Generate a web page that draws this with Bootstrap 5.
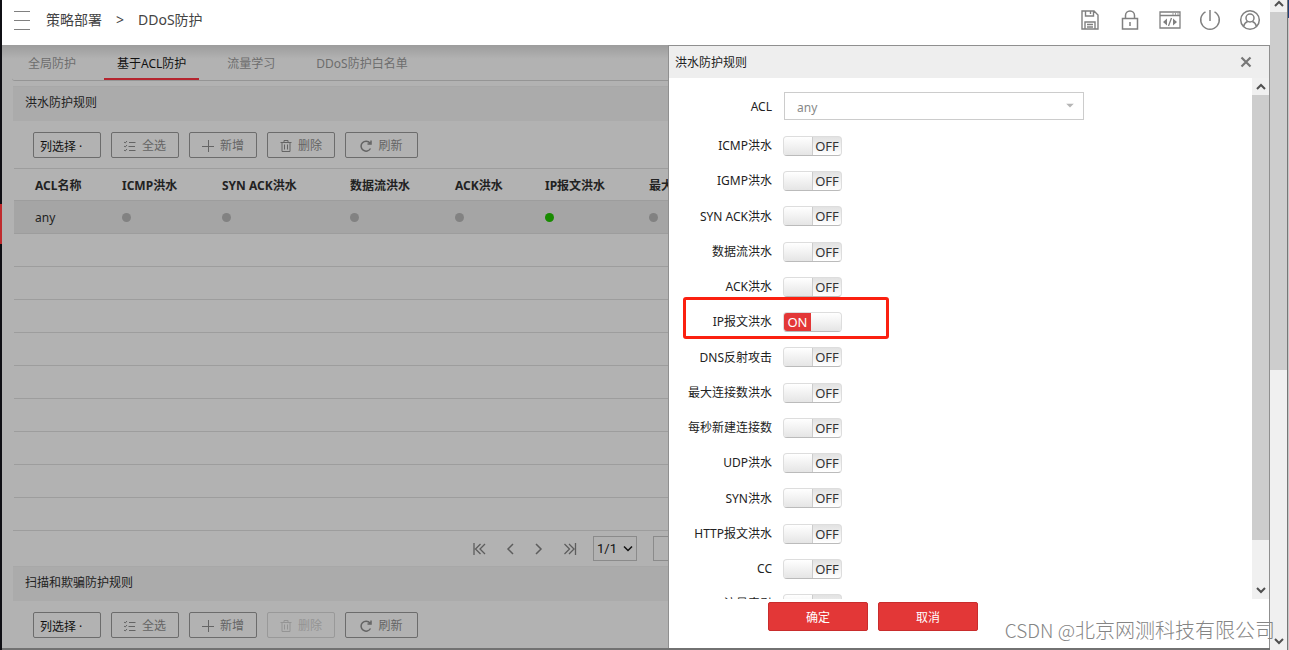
<!DOCTYPE html>
<html lang="zh-CN">
<head>
<meta charset="utf-8">
<meta name="viewport" content="width=device-width, initial-scale=1">
<title>DDoS防护</title>
<link href="https://cdn.jsdelivr.net/npm/bootstrap@5.3.0/dist/css/bootstrap.min.css" rel="stylesheet">
<style>
  body{font:12px/18px "Noto Sans","Noto Sans CJK SC",sans-serif;color:#222;background:#b2b2b2}
  svg{fill:none;stroke:currentColor;display:block}
  .rail{width:2px;background:#0f0f14;padding-top:204px}
  .rail i{display:block;height:40px;background:#c02b2e}
  .topbar{height:45px;background:#fff;padding:0 8px 2px 12px;color:#808080;z-index:1}
  .topbar nav{font-size:14px;color:#444}
  .topbar nav a{color:#444;text-decoration:none}
  .topbar nav span{margin:0 14px}
  .bare{border:0;background:none;padding:0;color:inherit}
  .stage{background:#b2b2b2}
  .stage::before{content:"";position:absolute;inset:0 0 auto;height:14px;background:linear-gradient(#0000001f,#0000);pointer-events:none}
  .page{padding:0 0 0 11px}
  .tabs{height:36px;border-bottom:1px solid #959595;border-bottom-left-radius:3px;margin:0 0 5px -1px;padding-left:3px}
  .tabs .nav-link{padding:10px 13px 0;height:35px;color:#6d6d6d;border-radius:0}
  .tabs .nav-item{margin-right:15px}
  .tabs .active{color:#111;border-bottom:2px solid #b5252f}
  .sect{height:35px;background:#ababab;padding:0 12px;font-size:12px;line-height:32px;margin:0;color:#222;font-weight:400;border-top:1px solid #a8a8a8}
  .tools{padding:11px 20px 10px;gap:10px}
  .tool{width:68px;height:26px;border:1px solid #6c6c6c;border-radius:2px;background:none;color:#646464;font-size:12px;padding:2px 0 0;gap:6px}
  .tool.wide{width:73px}
  .tool:disabled{border-color:#999;color:#949494}
  .pick{color:#111;padding:3px 0 0 6px}
  .rules{table-layout:fixed;margin:0 0 0 1px;border-collapse:separate;border-spacing:0}
  .rules tr{height:33px}
  .rules thead tr{height:32px}
  .rules th,.rules td{padding:0 10px;white-space:nowrap;border-top:1px solid #9d9d9d}
  .rules th{padding-top:2px}
  .rules th:first-child,.rules td:first-child{padding-left:21px}
  .rules .picked{background:#a5a5a5}
  .rules .picked td{padding-top:1px}
  .dot{display:block;width:9px;height:9px;border-radius:50%;background:#828282}
  .dot.live{background:#188b00}
  .pager{height:36px;border-top:1px solid #9d9d9d;color:#5d5d5d;padding-left:460px}
  .pager select,.pager input{height:25px;border:1px solid #8b8b8b;background:transparent;width:44px;font:13px Roboto,sans-serif;color:#111;padding:0 3px}
  .pager select{appearance:none}
  .pager span{color:#111}
  .drawer{top:0;right:0;bottom:0;width:602px;background:#fff;border:1px solid #8f8f8f;border-bottom:0}
  .drawer-head{height:32px;background:#eee;padding:0 17px 0 6px;color:#777}
  .drawer-head h2{font-size:12px;margin:0;padding-top:2px;font-weight:400;color:#222}
  .fields{padding-top:14px}
  .line{height:35px}
  .line:nth-child(4n){height:36px}
  .line>label{width:103px;text-align:right;margin-right:11px;padding-top:1px}
  .acl{height:28px;margin-bottom:8px}
  .acl>label{margin-right:12px}
  .acl select{appearance:none;width:300px;height:28px;border:1px solid #ccc;border-radius:0;background:#fff;color:#888;font-size:12px;padding:3px 12px 0}
  .toggle{width:59px;height:20px;border:1px solid #ddd;border-bottom-color:#bbb;border-radius:4px;background:linear-gradient(#e2e2e2,#fff);overflow:hidden;font-size:13px;line-height:19px}
  .toggle input{position:absolute;inset:0;appearance:none;margin:0;cursor:pointer}
  .knob{width:29px;background:linear-gradient(#fff,#e5e5e5);border-right:1px solid #ccc}
  .word{flex:1;text-align:center;color:#333}
  .toggle.on .word{background:#e33737;color:#fff}
  .toggle.on .knob{border:0;width:30px}
  .marker{left:14px;top:-7px;width:206px;height:42px;border:3px solid #fb2010;border-radius:3px;pointer-events:none}
  .bar{width:17px;background:#f0f0f0;color:#505050}
  .bar i{background:#cdcdcd}
  .bar svg{width:10px;height:7px;stroke-width:2;margin:5px auto}
  .bar.outer{width:18px;border-right:1px solid #777}
  .outer svg:first-child{margin:0 auto 5px}
  .edge{width:1px;background:linear-gradient(#1f4078 18px,#c8c8c8 18px)}
  .actions{height:49px;padding:3px 0 0 99px;gap:10px}
  .actions .btn{width:100px;height:29px;background:#e33737;border-color:#c92c2c;border-radius:2px;color:#fff;font-size:12px;padding:2px 0 0}
  .foot{height:2px;background:#727272}
  .wm{right:14px;bottom:6px;font:300 20px/28px "Noto Sans CJK SC",sans-serif;color:#858585;z-index:5;pointer-events:none;white-space:nowrap}
  .wm span{font-size:19px}
</style>
</head>
<body>
<svg class="d-none">
  <symbol id="tasks" viewBox="0 0 12 12"><path d="M0 2l1.2 1L3 1M0 6l1.2 1L3 5M0 10l1.2 1L3 9M5 2.5h6.5M4.5 6.5H11M5 10.5h6.5"/></symbol>
  <symbol id="plus" viewBox="0 0 12 12"><path d="M0 6.500h12M6.500 0v12"/></symbol>
  <symbol id="trash" viewBox="0 0 12 12"><path d="M.5 2.500h11M4 2.500v-2h4v2M2 2.500v9h8v-9M4.500 4.500v5M7.500 4.500v5"/></symbol>
  <symbol id="reload" viewBox="0 0 12 12"><path d="M10.500 8.500a5 5 0 1 1-.5-5.500M11 .5v3.500H7.500" stroke-width="1.500"/></symbol>
  <symbol id="up" viewBox="0 0 10 7"><path d="M1 6l4-4 4 4"/></symbol>
  <symbol id="down" viewBox="0 0 10 7"><path d="M1 1l4 4 4-4"/></symbol>
</svg>
<div class="d-flex vh-100 overflow-hidden position-relative">
  <div class="rail flex-shrink-0"><i></i></div>
  <div class="d-flex flex-column flex-grow-1 overflow-hidden">
    <header class="topbar d-flex align-items-center flex-shrink-0">
      <button class="bare me-3 pb-1" aria-label="菜单"><svg width="16" height="20"><path d="M0 1.500h16M0 10.500h16M0 19.500h16"/></svg></button>
      <nav class="d-flex flex-grow-1 pb-1" aria-label="路径"><a href="#">策略部署</a><span>&gt;</span><a href="#">DDoS防护</a></nav>
      <div class="d-flex gap-3 pb-1">
        <button class="bare" aria-label="保存"><svg width="24" height="22" viewBox="-2 -1 24 22" stroke-width="1.400"><path d="M2 1h12l4 4v14H2zM5.500 1v5h8V1M10.500 1v3M5 19v-7h10v7M7 14.500h6M7 17h6"/></svg></button>
        <button class="bare" aria-label="锁定"><svg width="24" height="22" viewBox="-2 -1 24 22" stroke-width="1.500"><path d="M2.500 8.500h15v10.500h-15zM5.500 8.500v-3a4.500 4.500 0 0 1 9 0v3M10 12v4"/></svg></button>
        <button class="bare" aria-label="命令行"><svg width="24" height="22" viewBox="-2 -1 24 22" stroke-width="1.300"><path d="M0 2h20v16H0zM0 5.500h20M12.500 3.800h1M15 3.800h1M17.500 3.800h1M11.500 8l-3 8"/><path d="M7 8.500l-4 3.500 4 3.500zM13 8.500l4 3.500-4 3.500z" fill="currentColor" stroke="none"/></svg></button>
        <button class="bare" aria-label="退出"><svg width="24" height="22" viewBox="-2 -1 24 22" stroke-width="1.500"><path d="M10 0v11M5.500 1.800a9.300 9.300 0 1 0 9 0"/></svg></button>
        <button class="bare" aria-label="用户"><svg width="24" height="22" viewBox="-2 -1 24 22" stroke-width="1.500"><circle cx="10" cy="10" r="9.300"/><circle cx="10" cy="8" r="4"/><path d="M3.500 16.500c.8-3 2-4.300 4.200-5M16.500 16.500c-.8-3-2-4.300-4.200-5"/></svg></button>
      </div>
    </header>
    <main class="stage position-relative flex-grow-1 overflow-hidden">
      <div class="page">
        <ul class="nav tabs flex-nowrap">
          <li class="nav-item"><a class="nav-link" href="#">全局防护</a></li>
          <li class="nav-item"><a class="nav-link active" href="#">基于ACL防护</a></li>
          <li class="nav-item"><a class="nav-link" href="#">流量学习</a></li>
          <li class="nav-item"><a class="nav-link" href="#">DDoS防护白名单</a></li>
        </ul>
        <h2 class="sect">洪水防护规则</h2>
        <div class="tools d-flex">
          <button class="tool pick text-start">列选择 ·</button>
          <button class="tool d-flex align-items-center justify-content-center"><svg width="12" height="12"><use href="#tasks"/></svg>全选</button>
          <button class="tool d-flex align-items-center justify-content-center"><svg width="12" height="12"><use href="#plus"/></svg>新增</button>
          <button class="tool d-flex align-items-center justify-content-center"><svg width="12" height="12"><use href="#trash"/></svg>删除</button>
          <button class="tool wide d-flex align-items-center justify-content-center"><svg width="12" height="12"><use href="#reload"/></svg>刷新</button>
        </div>
        <table class="rules w-100">
          <colgroup><col style="width:98px"><col style="width:100px"><col style="width:128px"><col style="width:105px"><col style="width:90px"><col style="width:104px"><col></colgroup>
          <thead><tr><th>ACL名称</th><th>ICMP洪水</th><th>SYN ACK洪水</th><th>数据流洪水</th><th>ACK洪水</th><th>IP报文洪水</th><th>最大连接数洪水</th></tr></thead>
          <tbody>
            <tr class="picked"><td>any</td><td><i class="dot"></i></td><td><i class="dot"></i></td><td><i class="dot"></i></td><td><i class="dot"></i></td><td><i class="dot live"></i></td><td><i class="dot"></i></td></tr>
            <tr><td colspan="7"></td></tr><tr><td colspan="7"></td></tr><tr><td colspan="7"></td></tr>
            <tr><td colspan="7"></td></tr><tr><td colspan="7"></td></tr><tr><td colspan="7"></td></tr>
            <tr><td colspan="7"></td></tr><tr><td colspan="7"></td></tr><tr><td colspan="7"></td></tr>
          </tbody>
        </table>
        <div class="pager d-flex align-items-center">
          <button class="bare" aria-label="首页"><svg width="14" height="12" stroke-width="1.300"><path d="M1 0v12M7.500 1l-5 5 5 5M12 1L7 6l5 5"/></svg></button>
          <button class="bare ms-3" aria-label="上一页"><svg width="14" height="12" stroke-width="1.500"><path d="M10 1L5 6l5 5"/></svg></button>
          <button class="bare ms-3" aria-label="下一页"><svg width="14" height="12" stroke-width="1.500"><path d="M3 1l5 5-5 5"/></svg></button>
          <button class="bare ms-3" aria-label="末页"><svg width="14" height="12" stroke-width="1.300"><path d="M12.500 0v12M6 1l5 5-5 5M1.500 1l5 5-5 5"/></svg></button>
          <span class="ms-3 position-relative"><select aria-label="页码"><option>1/1</option></select><svg class="position-absolute top-50 end-0 translate-middle-y me-1" width="10" height="7" stroke-width="1.500"><use href="#down"/></svg></span>
          <input class="ms-3" aria-label="跳转" value="">
        </div>
        <h2 class="sect">扫描和欺骗防护规则</h2>
        <div class="tools d-flex">
          <button class="tool pick text-start">列选择 ·</button>
          <button class="tool d-flex align-items-center justify-content-center"><svg width="12" height="12"><use href="#tasks"/></svg>全选</button>
          <button class="tool d-flex align-items-center justify-content-center"><svg width="12" height="12"><use href="#plus"/></svg>新增</button>
          <button class="tool d-flex align-items-center justify-content-center" disabled><svg width="12" height="12"><use href="#trash"/></svg>删除</button>
          <button class="tool wide d-flex align-items-center justify-content-center"><svg width="12" height="12"><use href="#reload"/></svg>刷新</button>
        </div>
      </div>
      <aside class="drawer position-absolute d-flex flex-column">
        <div class="drawer-head d-flex align-items-center justify-content-between flex-shrink-0">
          <h2>洪水防护规则</h2>
          <button class="bare" aria-label="关闭"><svg width="12" height="12" stroke-width="2.200"><path d="M1.500 1.500l9 9M10.500 1.500l-9 9"/></svg></button>
        </div>
        <div class="d-flex flex-grow-1 overflow-hidden">
          <form class="fields flex-grow-1 overflow-hidden">
            <div class="line acl d-flex align-items-center"><label for="acl">ACL</label><span class="position-relative"><select id="acl"><option>any</option></select><svg class="position-absolute top-50 end-0 translate-middle-y me-2" width="12" height="5"><path d="M2 0h8L6 4z" fill="#b5b5b5" stroke="none"/></svg></span></div>
            <div class="line d-flex align-items-center"><label for="f1">ICMP洪水</label><span class="toggle d-flex position-relative"><span class="knob"></span><span class="word">OFF</span><input id="f1" type="checkbox"></span></div>
            <div class="line d-flex align-items-center"><label for="f2">IGMP洪水</label><span class="toggle d-flex position-relative"><span class="knob"></span><span class="word">OFF</span><input id="f2" type="checkbox"></span></div>
            <div class="line d-flex align-items-center"><label for="f3">SYN ACK洪水</label><span class="toggle d-flex position-relative"><span class="knob"></span><span class="word">OFF</span><input id="f3" type="checkbox"></span></div>
            <div class="line d-flex align-items-center"><label for="f4">数据流洪水</label><span class="toggle d-flex position-relative"><span class="knob"></span><span class="word">OFF</span><input id="f4" type="checkbox"></span></div>
            <div class="line d-flex align-items-center"><label for="f5">ACK洪水</label><span class="toggle d-flex position-relative"><span class="knob"></span><span class="word">OFF</span><input id="f5" type="checkbox"></span></div>
            <div class="line d-flex align-items-center position-relative"><label for="f6">IP报文洪水</label><span class="toggle on d-flex position-relative"><span class="word">ON</span><span class="knob"></span><input id="f6" type="checkbox" checked></span><span class="marker position-absolute"></span></div>
            <div class="line d-flex align-items-center"><label for="f7">DNS反射攻击</label><span class="toggle d-flex position-relative"><span class="knob"></span><span class="word">OFF</span><input id="f7" type="checkbox"></span></div>
            <div class="line d-flex align-items-center"><label for="f8">最大连接数洪水</label><span class="toggle d-flex position-relative"><span class="knob"></span><span class="word">OFF</span><input id="f8" type="checkbox"></span></div>
            <div class="line d-flex align-items-center"><label for="f9">每秒新建连接数</label><span class="toggle d-flex position-relative"><span class="knob"></span><span class="word">OFF</span><input id="f9" type="checkbox"></span></div>
            <div class="line d-flex align-items-center"><label for="f10">UDP洪水</label><span class="toggle d-flex position-relative"><span class="knob"></span><span class="word">OFF</span><input id="f10" type="checkbox"></span></div>
            <div class="line d-flex align-items-center"><label for="f11">SYN洪水</label><span class="toggle d-flex position-relative"><span class="knob"></span><span class="word">OFF</span><input id="f11" type="checkbox"></span></div>
            <div class="line d-flex align-items-center"><label for="f12">HTTP报文洪水</label><span class="toggle d-flex position-relative"><span class="knob"></span><span class="word">OFF</span><input id="f12" type="checkbox"></span></div>
            <div class="line d-flex align-items-center"><label for="f13">CC</label><span class="toggle d-flex position-relative"><span class="knob"></span><span class="word">OFF</span><input id="f13" type="checkbox"></span></div>
            <div class="line d-flex align-items-center"><label for="f14">流量牵引</label><span class="toggle d-flex position-relative"><span class="knob"></span><span class="word">OFF</span><input id="f14" type="checkbox"></span></div>
          </form>
          <div class="bar d-flex flex-column flex-shrink-0"><svg><use href="#up"/></svg><i style="height:85.4%"></i><svg class="mt-auto"><use href="#down"/></svg></div>
        </div>
        <div class="actions d-flex flex-shrink-0">
          <button class="btn">确定</button><button class="btn">取消</button>
        </div>
      </aside>
    </main>
    <div class="foot flex-shrink-0"></div>
  </div>
  <div class="bar outer d-flex flex-column flex-shrink-0"><svg><use href="#up"/></svg><i style="height:55.1%"></i><svg class="mt-auto"><use href="#down"/></svg></div>
  <div class="edge flex-shrink-0"></div>
  <div class="wm position-absolute"><span>CSDN @</span>北京网测科技有限公司</div>
</div>
<script src="https://cdn.jsdelivr.net/npm/bootstrap@5.3.0/dist/js/bootstrap.bundle.min.js"></script>
</body>
</html>
